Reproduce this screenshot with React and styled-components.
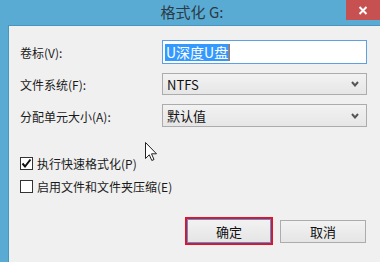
import React from "react";
import styled, { createGlobalStyle } from "styled-components";

const Global = createGlobalStyle`
  html, body { margin: 0; padding: 0; }
  body {
    width: 380px; height: 262px; overflow: hidden;
    font-family: "Noto Sans CJK SC", "Microsoft YaHei", sans-serif;
  }
`;

const Window = styled.div`
  width: 380px;
  height: 262px;
  background: #5aabd4;
  display: flex;
  flex-direction: column;
  position: relative;
  overflow: hidden;
`;

const TitleBar = styled.div`
  height: 25px;
  display: grid;
  grid-template-columns: 1fr auto 1fr;
  align-items: start;
  flex: none;
`;

const Title = styled.div`
  grid-column: 2;
  font-size: 15px;
  line-height: 24px;
  color: #2b3a44;
  padding-left: 4px;
  font-family: "Noto Sans CJK SC", sans-serif;
`;

const CloseBtn = styled.div`
  grid-column: 3;
  justify-self: end;
  width: 34px;
  height: 20px;
  background: #c75050;
  display: flex;
  align-items: center;
  justify-content: center;
`;

const Body = styled.div`
  flex: 1;
  margin-left: 8px;
  background: #f0f0f0;
  border-left: 1px solid #4a95bd;
  border-top: 1px solid #4a95bd;
  padding: 14px 13px 0 11px;
  display: flex;
  flex-direction: column;
  position: relative;
`;

const Form = styled.div`
  display: grid;
  grid-template-columns: 142px 205px;
  row-gap: 9px;
  align-items: center;
`;

const Label = styled.div`
  font-size: 12px;
  color: #1a1a1a;
  padding-top: 1px;
`;

const Input = styled.div`
  height: 24px;
  box-sizing: border-box;
  border: 1px solid #5ea0e4;
  background: #fff;
  display: flex;
  align-items: center;
  padding-left: 2px;
`;

const Selected = styled.span`
  background: #3399ff;
  color: #fff;
  font-size: 14px;
  line-height: 17px;
  padding: 0 1px;
  border-right: 1px solid #d2691e;
`;

const Select = styled.div`
  height: ${(p) => p.h}px;
  box-sizing: border-box;
  border: 1px solid #acacac;
  background: linear-gradient(#f2f2f2, #e6e6e6);
  display: flex;
  align-items: center;
  justify-content: space-between;
  padding: 0 7px 0 4px;
  font-size: 13px;
  color: #111;
`;

const Checks = styled.div`
  margin-top: 30px;
  display: flex;
  flex-direction: column;
  gap: 10px;
`;

const CheckRow = styled.div`
  display: flex;
  align-items: center;
  gap: 4px;
  font-size: 12px;
  color: #1a1a1a;
  height: 13px;
`;

const Box = styled.div`
  width: 13px;
  height: 13px;
  box-sizing: border-box;
  border: 1px solid #333;
  background: #fff;
  display: flex;
  align-items: center;
  justify-content: center;
`;

const Buttons = styled.div`
  margin-top: 24px;
  display: flex;
  justify-content: flex-end;
  align-items: center;
  gap: 7px;
  padding-right: 1px;
`;

const Focus = styled.div`
  border: 2px solid #e81123;
  padding: 0;
`;

const Button = styled.div`
  width: ${(p) => p.w}px;
  height: ${(p) => p.h}px;
  box-sizing: border-box;
  border: 1px solid ${(p) => (p.focus ? "#3c9be8" : "#acacac")};
  background: linear-gradient(#f2f2f2, #e5e5e5);
  display: flex;
  align-items: center;
  justify-content: center;
  font-size: 13px;
  color: #111;
`;

const Cursor = styled.svg`
  position: absolute;
  left: 136px;
  top: 116px;
`;

const Chevron = () => (
  <svg width="8" height="6" viewBox="0 0 8 6">
    <path d="M1 1 L4 4.5 L7 1" fill="none" stroke="#555" strokeWidth="2" />
  </svg>
);

export default function App() {
  return (
    <>
      <Global />
      <Window>
        <TitleBar>
          <Title>格式化 G:</Title>
          <CloseBtn>
            <svg width="10" height="9" viewBox="0 0 10 9">
              <path d="M1.5 1 L8.5 8 M8.5 1 L1.5 8" stroke="#fff" strokeWidth="2" />
            </svg>
          </CloseBtn>
        </TitleBar>
        <Body>
          <Form>
            <Label>卷标(V):</Label>
            <Input>
              <Selected>U深度U盘</Selected>
            </Input>
            <Label>文件系统(F):</Label>
            <Select h={22}>
              NTFS
              <Chevron />
            </Select>
            <Label>分配单元大小(A):</Label>
            <Select h={23}>
              默认值
              <Chevron />
            </Select>
          </Form>
          <Checks>
            <CheckRow>
              <Box>
                <svg width="11" height="11" viewBox="0 0 11 11">
                  <path d="M1.5 5.5 L4 8.5 L9.5 1.5" fill="none" stroke="#111" strokeWidth="2" />
                </svg>
              </Box>
              执行快速格式化(P)
            </CheckRow>
            <CheckRow>
              <Box />
              启用文件和文件夹压缩(E)
            </CheckRow>
          </Checks>
          <Buttons>
            <Focus>
              <Button focus w={84} h={24}>确定</Button>
            </Focus>
            <Button w={86} h={23}>取消</Button>
          </Buttons>
          <Cursor width="13" height="20" viewBox="0 0 13 20">
            <path
              d="M0.5 0.5 L0.5 16.5 L4.3 12.8 L6.8 18.5 L9 17.5 L6.5 11.8 L11.5 11.8 Z"
              fill="#fff"
              stroke="#222"
              strokeWidth="1"
              strokeLinejoin="round"
            />
          </Cursor>
        </Body>
      </Window>
    </>
  );
}
